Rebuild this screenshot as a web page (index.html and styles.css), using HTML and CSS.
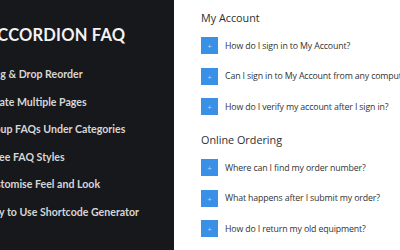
FILE: index.html
```html
<!DOCTYPE html>
<html lang="en">
<head>
  <meta charset="UTF-8" />
  <title>Accordion FAQ</title>
  <link rel="stylesheet" href="styles.css">
</head>
<body>
  <div class="side">
    <div class="side-inner">
      <h1 class="title">ACCORDION FAQ</h1>
      <ul class="features">
        <li>Drag &amp; Drop Reorder</li>
        <li>Create Multiple Pages</li>
        <li>Group FAQs Under Categories</li>
        <li>Three FAQ Styles</li>
        <li>Customise Feel and Look</li>
        <li>Easy to Use Shortcode Generator</li>
      </ul>
    </div>
  </div>

  <div class="faq">
    <h2 class="group">My Account</h2>
    <div class="item"><span class="plus">+</span>How do I sign in to My Account?</div>
    <div class="item"><span class="plus">+</span>Can I sign in to My Account from any computer?</div>
    <div class="item"><span class="plus">+</span>How do I verify my account after I sign in?</div>

    <h2 class="group">Online Ordering</h2>
    <div class="item"><span class="plus">+</span>Where can I find my order number?</div>
    <div class="item"><span class="plus">+</span>What happens after I submit my order?</div>
    <div class="item"><span class="plus">+</span>How do I return my old equipment?</div>
  </div>
</body>
</html>
```

FILE: styles.css
```css
* {
  box-sizing: border-box;
}

html, body {
  margin: 0;
  padding: 0;
  width: 400px;
  height: 250px;
  overflow: hidden;
}

body {
  display: flex;
  background: #fff;
}

.side {
  width: 174px;
  flex-shrink: 0;
  height: 250px;
  background: #16181c;
  overflow: hidden;
}

.side-inner {
  margin-left: -14px;
  white-space: nowrap;
}

.title {
  margin: 26px 0 0;
  font-family: Lato, sans-serif;
  font-size: 16.5px;
  font-weight: 700;
  letter-spacing: 0.2px;
  color: #f2f2f2;
  line-height: 18px;
}

.features {
  list-style: none;
  margin: 23px 0 0 -3px;
  padding: 0;
}

.features li {
  font-family: Lato, sans-serif;
  font-size: 10.6px;
  font-weight: 700;
  color: #d6d6d6;
  line-height: 15px;
  margin-bottom: 12.5px;
}

.faq {
  flex: 1;
  padding: 10px 0 0 27px;
  font-family: "Open Sans", sans-serif;
  white-space: nowrap;
  overflow: hidden;
}

.group {
  margin: 0 0 12px;
  font-size: 10.8px;
  font-weight: 400;
  color: #2e2e2e;
  line-height: 15px;
}

.item {
  display: flex;
  align-items: center;
  gap: 7px;
  height: 17px;
  margin-bottom: 13.5px;
  font-size: 8.8px;
  letter-spacing: -0.15px;
  color: #333;
}

.item:nth-of-type(3) {
  margin-bottom: 17px;
}

.plus {
  width: 17px;
  height: 17px;
  flex-shrink: 0;
  background: #3a8fe6;
  color: #bcd8f7;
  font-size: 8px;
  letter-spacing: 0;
  line-height: 17px;
  text-align: center;
}
```
